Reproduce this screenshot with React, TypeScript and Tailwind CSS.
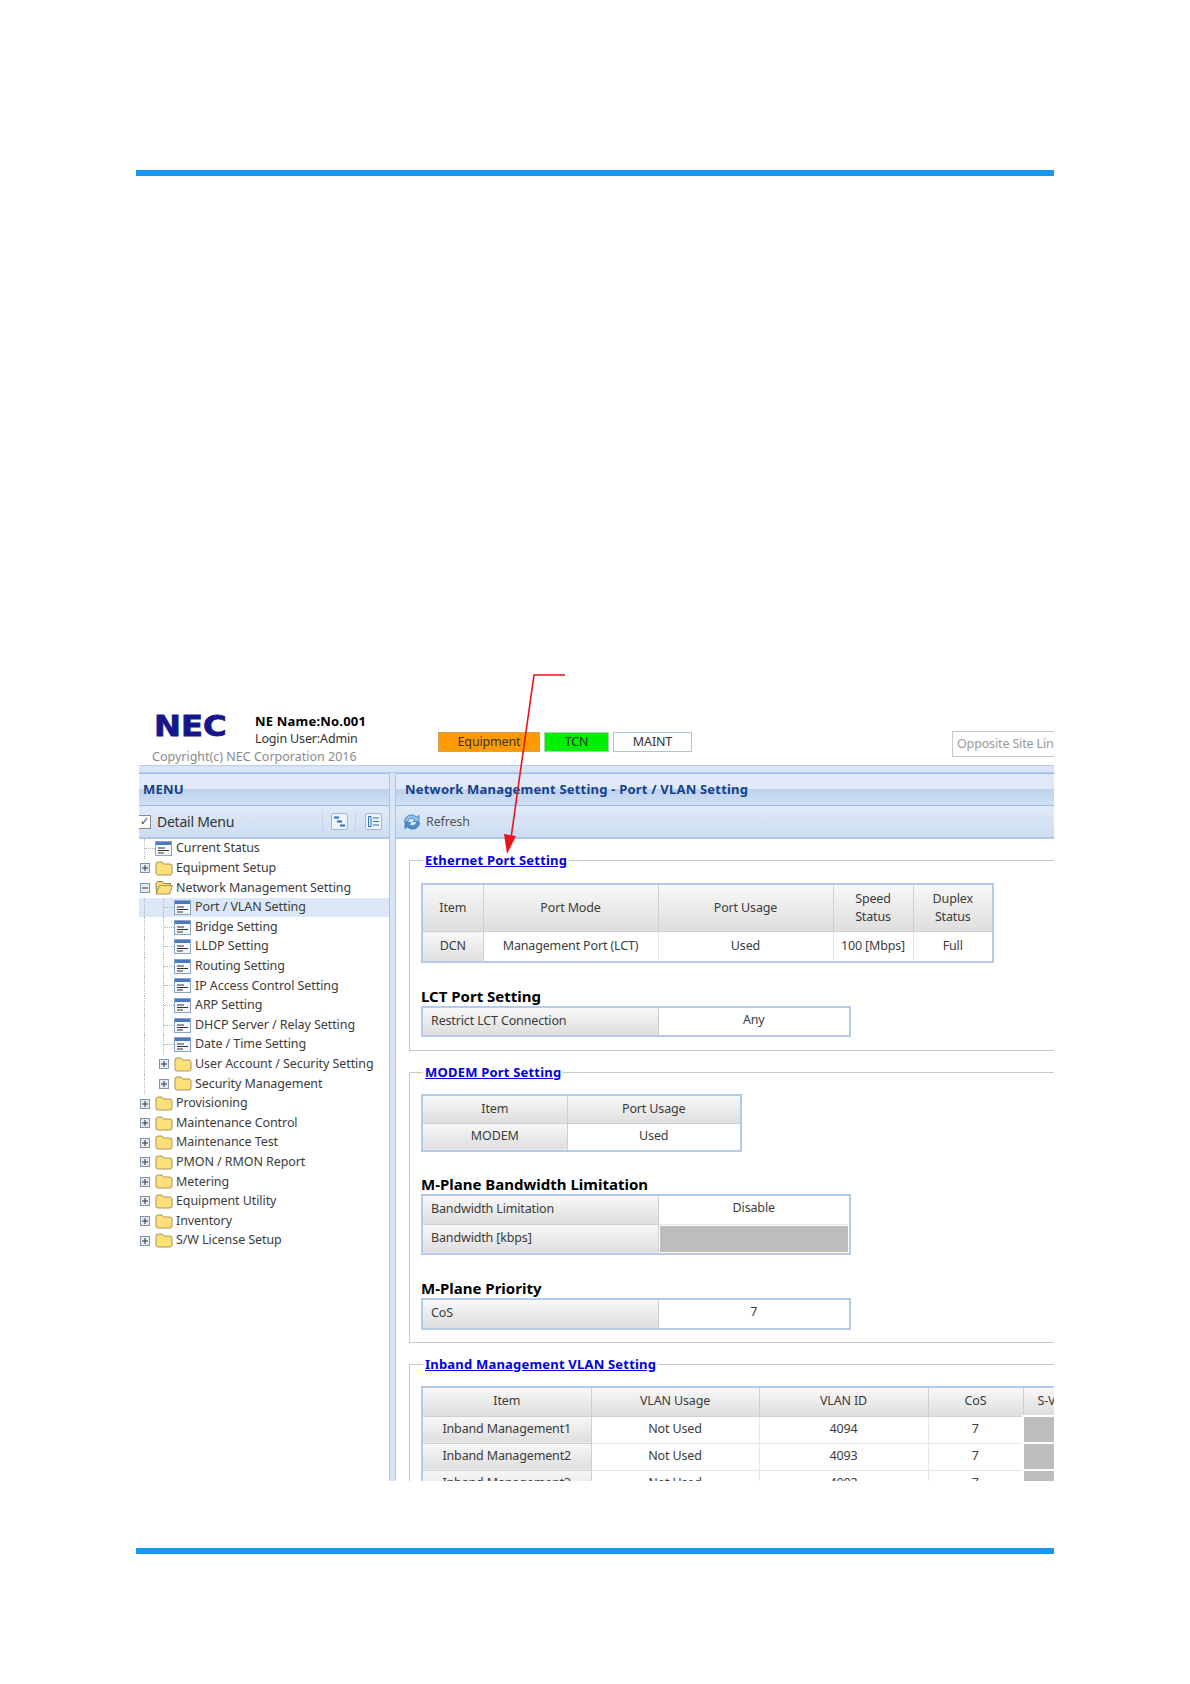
const tahoma = { fontFamily: '"Noto Sans", "Liberation Sans", sans-serif' }

const small = 'text-[12.5px] tracking-[-0.15px]'

const topTree: { label: string; kind: string; level: number }[] = [
  { label: 'Current Status', kind: 'doc', level: 0 },
  { label: 'Equipment Setup', kind: 'plus', level: 0 },
  { label: 'Network Management Setting', kind: 'minus', level: 0 },
  { label: 'Port / VLAN Setting', kind: 'doc', level: 1 },
  { label: 'Bridge Setting', kind: 'doc', level: 1 },
  { label: 'LLDP Setting', kind: 'doc', level: 1 },
  { label: 'Routing Setting', kind: 'doc', level: 1 },
  { label: 'IP Access Control Setting', kind: 'doc', level: 1 },
  { label: 'ARP Setting', kind: 'doc', level: 1 },
  { label: 'DHCP Server / Relay Setting', kind: 'doc', level: 1 },
  { label: 'Date / Time Setting', kind: 'doc', level: 1 },
  { label: 'User Account / Security Setting', kind: 'plus', level: 1 },
  { label: 'Security Management', kind: 'plus', level: 1 },
  { label: 'Provisioning', kind: 'plus', level: 0 },
  { label: 'Maintenance Control', kind: 'plus', level: 0 },
  { label: 'Maintenance Test', kind: 'plus', level: 0 },
  { label: 'PMON / RMON Report', kind: 'plus', level: 0 },
  { label: 'Metering', kind: 'plus', level: 0 },
  { label: 'Equipment Utility', kind: 'plus', level: 0 },
  { label: 'Inventory', kind: 'plus', level: 0 },
  { label: 'S/W License Setup', kind: 'plus', level: 0 },
]

function DocIcon() {
  return (
    <svg width="17" height="15" viewBox="0 0 17 15" className="shrink-0">
      <rect x="0.5" y="0.5" width="16" height="14" fill="#f4f6f9" stroke="#8ba3c4" />
      <rect x="1" y="1" width="15" height="3" fill="#4a78c4" />
      <path d="M3 7h7M3 9.500h11M3 12h6" stroke="#333" strokeWidth="1" />
    </svg>
  )
}

function FolderIcon({ open }: { open?: boolean }) {
  return (
    <svg width="18" height="15" viewBox="0 0 18 15" className="shrink-0">
      {open ? (
        <path d="M1 3.500 2.500 1.500h5l1.500 2h6.500v2H5L1.500 13z" fill="#f5d878" stroke="#8f8048" />
      ) : null}
      <path
        d={open ? 'M4.500 5.500h13l-3 8.500H1z' : 'M1 3q0-2 2-2h4l1.500 2H15q2 0 2 2v7q0 2-2 2H3q-2 0-2-2z'}
        fill="#fddf78"
        stroke="#a8965a"
      />
    </svg>
  )
}

function Expander({ minus }: { minus?: boolean }) {
  return (
    <svg width="10" height="10" viewBox="0 0 10 10" className="shrink-0">
      <rect x="0.5" y="0.5" width="9" height="9" fill="#e6eaf0" stroke="#7f93ad" />
      <path d={minus ? 'M2 5h6' : 'M2 5h6M5 2v6'} stroke="#334" />
    </svg>
  )
}

function Guide() {
  return (
    <span className="ml-[5px] flex h-full w-[11px] shrink-0 items-center border-l border-dotted border-[#b5b5b5]">
      <span className="w-full border-t border-dotted border-[#b5b5b5]" />
    </span>
  )
}

function TreeRow({ label, kind, level }: { label: string; kind: string; level: number }) {
  const selected = label === 'Port / VLAN Setting'
  return (
    <div className={'flex h-[19.6px] items-center ' + (selected ? 'bg-[#dce8f8]' : '')}>
      {level === 1 && (
        <span className="ml-[5px] h-full w-[14px] shrink-0 border-l border-dotted border-[#b5b5b5]" />
      )}
      {kind === 'doc' ? (
        <Guide />
      ) : (
        <span className="ml-[1px] flex w-[15px] shrink-0 items-center">
          <Expander minus={kind === 'minus'} />
        </span>
      )}
      {kind === 'doc' ? <DocIcon /> : <FolderIcon open={kind === 'minus'} />}
      <span className={'text-[12.5px] tracking-[-0.08px] whitespace-nowrap text-[#3c3c3c] ' + (kind === 'doc' ? 'ml-[4px]' : 'ml-[3px]')}>{label}</span>
    </div>
  )
}

function PanelTitle({ children, inset }: { children: string; inset: string }) {
  return (
    <div className={'flex h-[33px] items-center border-y border-[#99bce8] bg-linear-to-b from-[#dfe9f7] from-50% via-[#bdd2ee] via-50% to-[#cfe0f4] text-[13px] font-bold tracking-[0.2px] text-[#15428b] ' + inset}>
      {children}
    </div>
  )
}

const th = 'border border-[#d0d0d0] bg-linear-to-b from-[#f8f8f8] to-[#dedede] font-normal text-[#3c3c3c]'
const td = 'border border-[#e6e6e6] bg-white font-normal text-[#3c3c3c]'

function Legend({ children }: { children: string }) {
  return (
    <legend className="ml-[2px] px-[2px] text-[13px] font-bold tracking-[0.2px] text-[#0000e0] underline">{children}</legend>
  )
}

function SubHeading({ children, className }: { children: string; className: string }) {
  return <h3 className={'text-[15px] leading-[18px] font-bold text-black ' + className}>{children}</h3>
}

function KeyValue({ rows, height }: { rows: [string, string | null][]; height: string }) {
  return (
    <table className={'w-[430px] table-fixed border-collapse border-2 border-[#b3cbe8] ' + small}>
      <colgroup>
        <col className="w-[236px]" />
        <col />
      </colgroup>
      <tbody>
        {rows.map(([k, v]) => (
          <tr key={k} className={height}>
            <td className={th + ' pl-[8px] text-left'}>{k}</td>
            {v === null ? (
              <td className="border border-[#e6e6e6] bg-white p-[1px]">
                <div className="h-[26px] bg-[#bdbdbd]" />
              </td>
            ) : (
              <td className={td + ' pb-[2px] text-center'}>{v}</td>
            )}
          </tr>
        ))}
      </tbody>
    </table>
  )
}

function Header() {
  return (
    <div className="flex h-[65px] shrink-0">
      <div className="w-[299px] shrink-0 pt-[12px] pl-[13px]">
        <div className="flex">
          <div className="w-[103px] pl-[2px]">
            <span
              className="block origin-left scale-x-[1.15] text-[28px] leading-[29px] font-bold text-[#16168c] [-webkit-text-stroke:0.8px_#16168c]"
              style={{ fontFamily: '"DejaVu Sans", sans-serif' }}
            >
              NEC
            </span>
          </div>
          <div className="text-[13px] leading-[18px]">
            <div className="font-bold tracking-[0.2px] text-black">NE Name:No.001</div>
            <div className={small + ' text-[#333]'}>Login User:Admin</div>
          </div>
        </div>
        <div className="text-[12.5px] leading-[18px] whitespace-nowrap text-[#8a8a8a]">Copyright(c) NEC Corporation 2016</div>
      </div>
      <div className={'flex items-start gap-[4px] pt-[32px] ' + small}>
        <div className="flex h-[20px] w-[102px] items-center justify-center border border-[#c9a468] bg-[#ff9a00] text-[#333]">Equipment</div>
        <div className="flex h-[20px] w-[65px] items-center justify-center border border-[#a8d8a8] bg-[#00f000] text-[#333]">TCN</div>
        <div className="flex h-[20px] w-[79px] items-center justify-center border border-[#a9c4e6] bg-white text-[#333]">MAINT</div>
      </div>
      <div className="ml-auto flex items-start pt-[31px]">
        <div className={'flex h-[26px] w-[102px] items-center overflow-hidden border border-r-0 border-[#c8c8c8] pl-[4px] whitespace-nowrap text-[#9a9a9a] ' + small}>
          Opposite Site Link
        </div>
      </div>
    </div>
  )
}

function Sidebar() {
  return (
    <div className="w-[250px] shrink-0">
      <PanelTitle inset="pl-[4px]">MENU</PanelTitle>
      <div className="flex h-[33px] items-center border-b-2 border-[#b0c8e6] bg-linear-to-b from-[#e0eaf7] to-[#ccddf2]">
        <span className="-ml-[2px] flex h-[14px] w-[14px] items-center justify-center border border-[#8a8a8a] bg-white text-[11px] text-[#444]">✓</span>
        <span className="ml-[6px] text-[14px] tracking-[-0.25px] text-[#333]">Detail Menu</span>
        <span className="ml-[88px] h-[20px] border-l border-[#c2d5ec]" />
        <span className="ml-[8px] flex h-[17px] w-[17px] items-center justify-center rounded-[2px] border border-[#9db7d8] bg-[#eef4fb]">
          <svg width="13" height="13" viewBox="0 0 13 13"><path d="M1 2.500h5M4 6.500h5M7 10.500h5" stroke="#2f6db5" strokeWidth="2" /></svg>
        </span>
        <span className="ml-[7px] h-[20px] border-l border-[#c2d5ec]" />
        <span className="ml-[9px] flex h-[17px] w-[17px] items-center justify-center rounded-[2px] border border-[#9db7d8] bg-[#eef4fb]">
          <svg width="13" height="13" viewBox="0 0 13 13"><path d="M1.500 1.500h2.500v10H1.500zM6 3h6M6 6.500h6M6 10h6" fill="none" stroke="#2f6db5" /></svg>
        </span>
      </div>
      <div>
        {topTree.map(r => <TreeRow key={r.label} {...r} />)}
      </div>
    </div>
  )
}

function Content() {
  return (
    <div className="min-w-0 flex-1 overflow-hidden">
      <PanelTitle inset="pl-[9px]">Network Management Setting - Port / VLAN Setting</PanelTitle>
      <div className="flex h-[33px] items-center border-b-2 border-[#b0c8e6] bg-linear-to-b from-[#e0eaf7] to-[#ccddf2] pl-[7px]">
        <svg width="18" height="18" viewBox="0 0 18 18" fill="none">
          <path d="M1.500 9a7 7 0 0 1 12-5l2.500-1.500v6h-6l2-2A4.500 4.500 0 0 0 4.500 9z" fill="#8fc0e8" stroke="#3a78b8" strokeWidth="0.8" />
          <path d="M16.500 9.500a7 7 0 0 1-12 4.500l-2.500 1.500v-6h6l-2 2a4.500 4.500 0 0 0 7.500-2z" fill="#4a8fd0" stroke="#3a78b8" strokeWidth="0.8" />
        </svg>
        <span className={'ml-[5px] pt-[1px] text-[#555] ' + small}>Refresh</span>
      </div>
      <div className="w-[700px] pt-[12px] pl-[13px]">
        <fieldset className="w-[700px] border border-[#c8c8c8] pb-[13px] pl-[11px]">
          <Legend>Ethernet Port Setting</Legend>
          <table className={'mt-[12px] w-[573px] table-fixed border-collapse border-2 border-[#b3cbe8] text-center ' + small}>
            <colgroup>
              <col className="w-[61px]" />
              <col className="w-[175px]" />
              <col className="w-[175px]" />
              <col className="w-[80px]" />
              <col />
            </colgroup>
            <tbody>
              <tr className="h-[48px] leading-[18px]">
                <th className={th}>Item</th>
                <th className={th}>Port Mode</th>
                <th className={th}>Port Usage</th>
                <th className={th}>Speed<br />Status</th>
                <th className={th}>Duplex<br />Status</th>
              </tr>
              <tr className="h-[30px]">
                <td className={th}>DCN</td>
                <td className={td}>Management Port (LCT)</td>
                <td className={td}>Used</td>
                <td className={td}>100 [Mbps]</td>
                <td className={td}>Full</td>
              </tr>
            </tbody>
          </table>
          <SubHeading className="mt-[24px] mb-[1px]">LCT Port Setting</SubHeading>
          <KeyValue rows={[['Restrict LCT Connection', 'Any']]} height="h-[29px]" />
        </fieldset>
        <fieldset className="mt-[12px] w-[700px] border border-[#c8c8c8] pb-[12px] pl-[11px]">
          <Legend>MODEM Port Setting</Legend>
          <table className={'mt-[12px] w-[321px] table-fixed border-collapse border-2 border-[#b3cbe8] text-center ' + small}>
            <colgroup>
              <col className="w-[145px]" />
              <col />
            </colgroup>
            <tbody>
              <tr className="h-[28px]">
                <th className={th}>Item</th>
                <th className={th}>Port Usage</th>
              </tr>
              <tr className="h-[28px]">
                <td className={th}>MODEM</td>
                <td className={td}>Used</td>
              </tr>
            </tbody>
          </table>
          <SubHeading className="mt-[23px] mb-[1px]">M-Plane Bandwidth Limitation</SubHeading>
          <KeyValue rows={[['Bandwidth Limitation', 'Disable'], ['Bandwidth [kbps]', null]]} height="h-[29px]" />
          <SubHeading className="mt-[24px] mb-[1px]">M-Plane Priority</SubHeading>
          <KeyValue rows={[['CoS', '7']]} height="h-[30px]" />
        </fieldset>
        <fieldset className="mt-[12px] w-[700px] border border-[#c8c8c8] pl-[11px]">
          <Legend>Inband Management VLAN Setting</Legend>
          <table className={'mt-[12px] w-[690px] table-fixed border-collapse border-2 border-[#b3cbe8] text-center ' + small}>
            <colgroup>
              <col className="w-[169px]" />
              <col className="w-[168px]" />
              <col className="w-[169px]" />
              <col className="w-[95px]" />
              <col />
            </colgroup>
            <tbody>
              <tr className="h-[29px]">
                <th className={th}>Item</th>
                <th className={th}>VLAN Usage</th>
                <th className={th}>VLAN ID</th>
                <th className={th}>CoS</th>
                <th className={th + ' pl-[14px] text-left'}>S-VLAN</th>
              </tr>
              {[['Inband Management1', '4094'], ['Inband Management2', '4093'], ['Inband Management3', '4092']].map(([name, id]) => (
                <tr key={name} className="h-[27px]">
                  <td className={th}>{name}</td>
                  <td className={td}>Not Used</td>
                  <td className={td}>{id}</td>
                  <td className={td}>7</td>
                  <td className="border-2 border-white bg-[#bdbdbd]" />
                </tr>
              ))}
            </tbody>
          </table>
        </fieldset>
      </div>
    </div>
  )
}

export default function App() {
  return (
    <div className="relative h-[1684px] w-[1190px] overflow-hidden bg-white" style={tahoma}>
      <div className="pt-[170px] pl-[136px]">
        <div className="h-[6px] w-[918px] bg-[#1797f0]" />
        <div className="mt-[524px] ml-[3px] flex h-[781px] w-[915px] flex-col overflow-hidden">
          <Header />
          <div className="h-[8px] shrink-0 border-y border-[#b7cdea] bg-[#d8e5f6]" />
          <div className="flex min-h-0 flex-1">
            <Sidebar />
            <div className="w-[7px] shrink-0 border-x border-[#a8c5ea] bg-[#d6e5f8]" />
            <Content />
          </div>
        </div>
        <div className="mt-[67px] h-[6px] w-[918px] bg-[#1797f0]" />
      </div>
      <svg className="absolute top-0 left-0" width="1190" height="1684" fill="none">
        <path d="M565 675H534L511 838" stroke="#e8141c" strokeWidth="1.6" />
        <path d="M504 834 516 836 507 854Z" fill="#e8141c" />
      </svg>
    </div>
  )
}
